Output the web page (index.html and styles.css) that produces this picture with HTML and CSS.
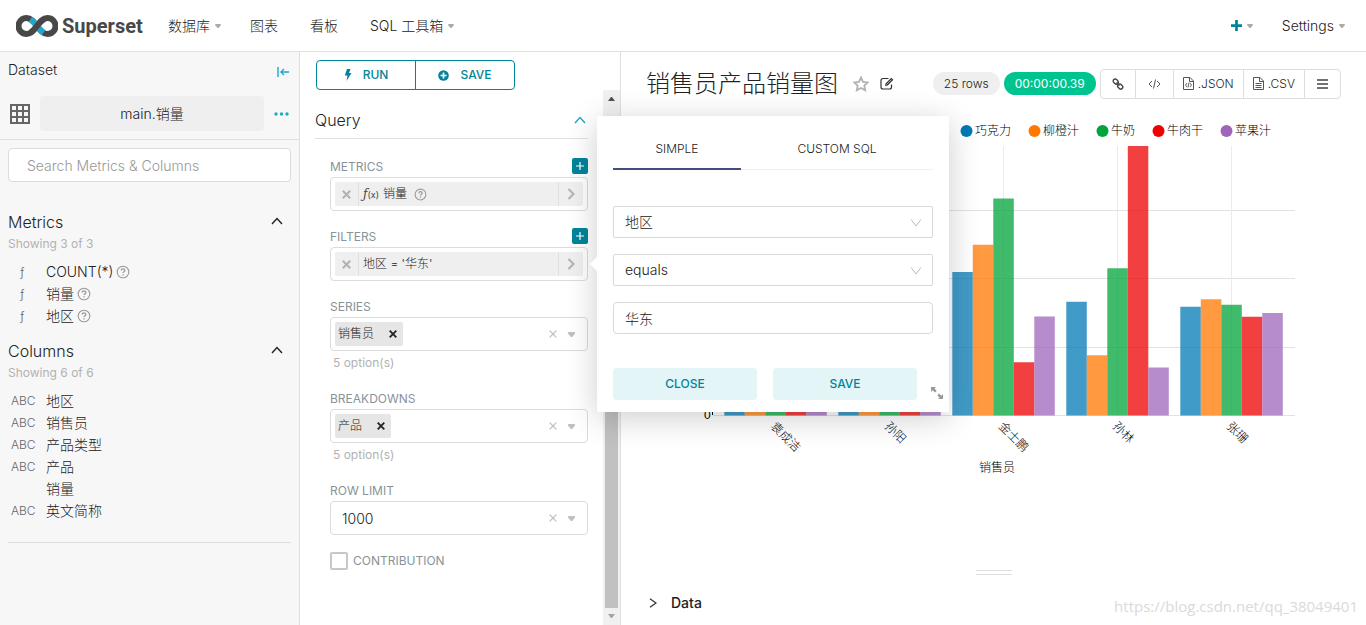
FILE: index.html
```html
<!DOCTYPE html>
<html lang="zh-CN">
<head>
<meta charset="utf-8">
<title>Superset</title>
<meta name="viewport" content="width=device-width, initial-scale=1">
<link rel="stylesheet" href="styles.css">
</head>
<body>
<svg class="defs" aria-hidden="true">
  <symbol id="caret" viewBox="0 0 6 4"><path d="M.5 0h5L6 1 3.500 4h-1L0 1z" fill="currentColor"/></symbol>
  <symbol id="help" viewBox="0 0 14 14"><circle cx="7" cy="7" r="5.800" fill="none" stroke="currentColor" stroke-width="1.100"/><path d="M5.200 5.600c0-2.300 3.600-2.200 3.600-.2 0 1.300-1.800 1.300-1.800 2.700M7 9.200v1.300" fill="none" stroke="currentColor" stroke-width="1.300"/></symbol>
  <symbol id="up" viewBox="0 0 12 8"><path d="M1 7l5-5.500L11 7" fill="none" stroke="currentColor" stroke-width="1.400"/></symbol>
  <symbol id="down" viewBox="0 0 12 8"><path d="M1 .5l5 6.500L11 .5" fill="none" stroke="currentColor"/></symbol>
  <symbol id="right" viewBox="0 0 8 12"><path d="M1.500 1l5 5-5 5" fill="none" stroke="currentColor" stroke-width="2"/></symbol>
  <symbol id="cross" viewBox="0 0 8 8"><path d="M.7.7l6.600 6.600M7.300.7L.7 7.300" fill="none" stroke="currentColor" stroke-width="1.800"/></symbol>
  <symbol id="thincross" viewBox="0 0 8 8"><path d="M.7.7l6.600 6.600M7.300.7L.7 7.300" fill="none" stroke="currentColor" stroke-width="1.200"/></symbol>
  <symbol id="plus" viewBox="0 0 12 12"><path d="M4.500 0h3v4.500H12v3H7.500V12h-3V7.500H0v-3h4.500z" fill="currentColor"/></symbol>
</svg>

<header class="topbar">
  <a class="brand" href="#">
    <svg class="brand-mark" viewBox="0 0 42 22" aria-hidden="true">
      <g fill="none" stroke-width="6">
        <path d="M21 11C18 7 15 3 10.500 3a8 8 0 0 0 0 16C15 19 18 15 21 11S27 3 31.500 3a8 8 0 0 1 0 16C27 19 24 15 21 11z" stroke="#484848"/>
        <path d="M14.500 4.200C17 5.800 19 8.300 21 11s4 5.200 6.500 6.800" stroke="#20a7c9"/>
        <path d="M14.500 17.800C17 16.200 19 13.700 21 11s4-5.200 6.500-6.800" stroke="#484848"/>
      </g>
    </svg>
    <span>Superset</span>
  </a>
  <nav class="menu">
    <a href="#">数据库<svg class="caret"><use href="#caret"/></svg></a>
    <a href="#">图表</a>
    <a href="#">看板</a>
    <a href="#">SQL 工具箱<svg class="caret"><use href="#caret"/></svg></a>
  </nav>
  <nav class="menu menu-right">
    <a class="add" href="#" aria-label="New"><svg class="plus"><use href="#plus"/></svg><svg class="caret"><use href="#caret"/></svg></a>
    <a href="#">Settings<svg class="caret"><use href="#caret"/></svg></a>
  </nav>
</header>

<main class="workspace">
  <aside class="dataset">
    <div class="dataset-head">
      <span>Dataset</span>
      <button class="plain teal" aria-label="Collapse"><svg width="12" height="10" viewBox="0 0 12 10"><path d="M1 0v10M12 5H4M7 2L4 5l3 3" fill="none" stroke="currentColor" stroke-width="1.400"/></svg></button>
    </div>
    <div class="dataset-name">
      <svg width="20" height="20" viewBox="0 0 20 20"><path d="M1 1h18v18H1zM1 7h18M1 13h18M7 1v18M13 1v18" fill="none" stroke="#666" stroke-width="2"/></svg>
      <button class="pill">main.销量</button>
      <button class="plain teal" aria-label="More"><svg width="15" height="4" viewBox="0 0 15 4"><g fill="currentColor"><circle cx="2" cy="2" r="1.700"/><circle cx="7.500" cy="2" r="1.700"/><circle cx="13" cy="2" r="1.700"/></g></svg></button>
    </div>
    <div class="dataset-body">
      <input class="search" type="text" placeholder="Search Metrics &amp; Columns" aria-label="Search Metrics &amp; Columns">
      <section class="group">
        <h2>Metrics<svg class="up"><use href="#up"/></svg></h2>
        <p>Showing 3 of 3</p>
        <ul>
          <li><i class="fn">ƒ</i>COUNT(*)<svg class="help"><use href="#help"/></svg></li>
          <li><i class="fn">ƒ</i>销量<svg class="help"><use href="#help"/></svg></li>
          <li><i class="fn">ƒ</i>地区<svg class="help"><use href="#help"/></svg></li>
        </ul>
      </section>
      <section class="group">
        <h2>Columns<svg class="up"><use href="#up"/></svg></h2>
        <p>Showing 6 of 6</p>
        <ul>
          <li><i>ABC</i>地区</li>
          <li><i>ABC</i>销售员</li>
          <li><i>ABC</i>产品类型</li>
          <li><i>ABC</i>产品</li>
          <li><i></i>销量</li>
          <li><i>ABC</i>英文简称</li>
        </ul>
      </section>
      <hr>
    </div>
  </aside>

  <section class="controls">
    <div class="actions">
      <button><svg width="8" height="12" viewBox="0 0 8 12"><path d="M3 0h3.500L5 4h2.500L2.500 12l1-5.500H.8z" fill="currentColor"/></svg>RUN</button>
      <button><svg width="11" height="11" viewBox="0 0 11 11"><circle cx="5.500" cy="5.500" r="5.300" fill="currentColor"/><path d="M5.500 2.500v6M2.500 5.500h6" stroke="#fff" stroke-width="1.700"/></svg>SAVE</button>
    </div>
    <div class="scroll">
      <div class="fields">
        <h2 class="query">Query<svg class="up"><use href="#up"/></svg></h2>
        <div class="stack">
          <div class="field">
            <div class="label">METRICS<button class="addbtn" aria-label="Add metric"><svg width="8" height="8" viewBox="0 0 8 8"><path d="M4 0v8M0 4h8" stroke="currentColor" stroke-width="1.200"/></svg></button></div>
            <div class="box">
              <div class="option">
                <button aria-label="Remove"><svg class="x"><use href="#cross"/></svg></button>
                <span class="option-text"><em>ƒ<small>(x)</small></em>销量<svg class="help"><use href="#help"/></svg></span>
                <button aria-label="Edit"><svg class="right"><use href="#right"/></svg></button>
              </div>
            </div>
          </div>
          <div class="field">
            <div class="label">FILTERS<button class="addbtn" aria-label="Add filter"><svg width="8" height="8" viewBox="0 0 8 8"><path d="M4 0v8M0 4h8" stroke="currentColor" stroke-width="1.200"/></svg></button></div>
            <div class="box">
              <div class="option">
                <button aria-label="Remove"><svg class="x"><use href="#cross"/></svg></button>
                <span class="option-text">地区 = '华东'</span>
                <button aria-label="Edit"><svg class="right"><use href="#right"/></svg></button>
              </div>
            </div>
            <form class="popover">
              <div class="tabs" role="tablist">
                <button type="button" role="tab" class="active" aria-selected="true">SIMPLE</button>
                <button type="button" role="tab" aria-selected="false">CUSTOM SQL</button>
              </div>
              <div class="inputs">
                <div class="select"><select aria-label="Column"><option>地区</option></select><svg class="down"><use href="#down"/></svg></div>
                <div class="select"><select aria-label="Operator"><option>equals</option></select><svg class="down"><use href="#down"/></svg></div>
                <input type="text" value="华东" aria-label="Value">
              </div>
              <div class="buttons">
                <button type="button">CLOSE</button>
                <button type="button">SAVE</button>
              </div>
              <svg class="resize" width="12" height="12" viewBox="0 0 12 12"><path d="M0 0h5L3.500 1.500l2.200 2.200-1.700 1.700-2.300-2.200L0 5zM12 12H7l1.500-1.500-2.200-2.200L8 6.600l2.300 2.200L12 7z" fill="#999"/></svg>
            </form>
          </div>
          <div class="field">
            <div class="label">SERIES</div>
            <div class="box">
              <span class="tag">销售员<button aria-label="Remove"><svg class="x"><use href="#cross"/></svg></button></span>
              <svg class="clear"><use href="#thincross"/></svg><svg class="drop"><use href="#caret"/></svg>
            </div>
            <div class="hint">5 option(s)</div>
          </div>
          <div class="field">
            <div class="label">BREAKDOWNS</div>
            <div class="box">
              <span class="tag">产品<button aria-label="Remove"><svg class="x"><use href="#cross"/></svg></button></span>
              <svg class="clear"><use href="#thincross"/></svg><svg class="drop"><use href="#caret"/></svg>
            </div>
            <div class="hint">5 option(s)</div>
          </div>
          <div class="field">
            <label class="label" for="limit">ROW LIMIT</label>
            <div class="box">
              <input id="limit" type="text" value="1000">
              <svg class="clear"><use href="#thincross"/></svg><svg class="drop"><use href="#caret"/></svg>
            </div>
          </div>
          <label class="check"><input type="checkbox">CONTRIBUTION</label>
        </div>
      </div>
      <div class="bar" aria-hidden="true">
        <svg width="7" height="4" viewBox="0 0 7 4"><path d="M0 4h7L4 0H3z" fill="#505050"/></svg>
        <span class="thumb"></span>
        <svg width="7" height="4" viewBox="0 0 7 4"><path d="M0 0h7L4 4H3z" fill="#a3a3a3"/></svg>
      </div>
    </div>
  </section>

  <section class="chart">
    <div class="chart-head">
      <h1>销售员产品销量图</h1>
      <button class="plain" aria-label="Favorite"><svg width="16" height="16" viewBox="0 0 16 16"><path d="M8 1.500l2 4.300 4.700.6-3.400 3.200.9 4.700L8 12l-4.200 2.300.9-4.700L1.300 6.400 6 5.800z" fill="none" stroke="#b2b2b2" stroke-width="1.800"/></svg></button>
      <button class="plain edit" aria-label="Edit"><svg width="15" height="13" viewBox="0 0 15 13"><path d="M8.500 1.500H3A2 2 0 0 0 1 3.500V10a2 2 0 0 0 2 2h6.500a2 2 0 0 0 2-2V7.500" fill="none" stroke="#333" stroke-width="1.200"/><path d="M5 9l.6-2.600L11.200.8l2.200 2L7.700 8.500z" fill="#333"/><path d="M6.500 7.500l5-5" stroke="#fff" stroke-width=".6"/></svg></button>
      <span class="badge">25 rows</span>
      <span class="badge time">00:00:00.39</span>
      <div class="tools">
        <button aria-label="Link"><svg width="12" height="12" viewBox="0 0 12 12"><g fill="none" stroke="#444" stroke-width="1.400"><rect x="1" y="1.500" width="5.500" height="4" rx="2" transform="rotate(45 3.700 3.500)"/><rect x="5.500" y="6.500" width="5.500" height="4" rx="2" transform="rotate(45 8.200 8.500)"/><path d="M4.500 4.500l3 3"/></g></svg></button>
        <button aria-label="Embed"><svg width="13" height="10" viewBox="0 0 13 10"><path d="M4 2L1 5l3 3M9 2l3 3-3 3M7.500.5l-2 9" fill="none" stroke="#555"/></svg></button>
        <button><svg width="11" height="13" viewBox="0 0 11 13"><path d="M.5.5h6.500l3.500 3.500v8.500H.5zM6.500.5V4.500h4" fill="none" stroke="#555"/><path d="M4 6L2.500 8 4 10M7 6l1.500 2L7 10M6 5.500l-1 5" fill="none" stroke="#555" stroke-width=".9"/></svg>.JSON</button>
        <button><svg width="11" height="13" viewBox="0 0 11 13"><path d="M.5.5h6.500l3.500 3.500v8.500H.5zM6.500.5V4.500h4M2.500 6.500h6M2.500 8.500h6M2.500 10.500h6" fill="none" stroke="#555"/></svg>.CSV</button>
        <button aria-label="Menu"><svg width="11" height="10" viewBox="0 0 11 10"><path d="M0 1h11M0 5h11M0 9h11" stroke="#444" stroke-width="1.600"/></svg></button>
      </div>
    </div>
    <svg class="plot" viewBox="645 115 696 370" role="img" aria-label="销售员产品销量图">
      <g stroke="#e2e2e2" shape-rendering="crispEdges">
        <path d="M713 210.500H1295M713 278.500H1295M713 347.500H1295M713 415.500H1295"/>
        <path d="M775.500 146V415M889.500 146V415M1003.500 146V415M1117.500 146V415M1231.500 146V415" stroke="#ebebeb"/>
      </g>
      <path d="M712.500 411V415" stroke="#000"/>
      <g fill-opacity=".75">
        <g fill="#0079b5"><path d="M724.300 330h20.500v85.500h-20.500zM838.300 320h20.500v95.500h-20.500zM952.300 272h20.500v143.500h-20.500zM1066.300 301.700h20.500v113.800h-20.500zM1180.300 306.800h20.500v108.700h-20.500z"/></g>
        <g fill="#ff7800"><path d="M744.800 300h20.500v115.500h-20.500zM858.800 340h20.500v75.500h-20.500zM972.800 244.700h20.500v170.800h-20.500zM1086.800 355.300h20.500v60.200h-20.500zM1200.800 299.200h20.500v116.300h-20.500z"/></g>
        <g fill="#00a43a"><path d="M765.300 310h20.500v105.500h-20.500zM879.300 290h20.500v125.500h-20.500zM993.300 198.400h20.500v217.100h-20.500zM1107.300 268.200h20.500v147.300h-20.500zM1221.300 304.800h20.500v110.700h-20.500z"/></g>
        <g fill="#ee0000"><path d="M785.800 350h20.500v65.500h-20.500zM899.800 330h20.500v85.500h-20.500zM1013.800 362.200h20.500v53.300h-20.500zM1127.800 146h20.500v269.500h-20.500zM1241.800 316.700h20.500v98.800h-20.500z"/></g>
        <g fill="#9e65bb"><path d="M806.300 320h20.500v95.500h-20.500zM920.300 340h20.500v75.500h-20.500zM1034.300 316.500h20.500v99h-20.500zM1148.300 367.500h20.500v48h-20.500zM1262.300 312.900h20.500v102.600h-20.500z"/></g>
      </g>
      <g class="legend">
        <circle cx="966.500" cy="131" r="6" fill="#0079b5"/><text x="975" y="135">巧克力</text>
        <circle cx="1034.500" cy="131" r="6" fill="#ff7800"/><text x="1043" y="135">柳橙汁</text>
        <circle cx="1102.500" cy="131" r="6" fill="#00a43a"/><text x="1111" y="135">牛奶</text>
        <circle cx="1158.500" cy="131" r="6" fill="#ee0000"/><text x="1167" y="135">牛肉干</text>
        <circle cx="1226.500" cy="131" r="6" fill="#9e65bb"/><text x="1235" y="135">苹果汁</text>
      </g>
      <g class="axis">
        <text x="704" y="419">0</text>
        <text transform="translate(770 427) rotate(45)">袁成洁</text>
        <text transform="translate(884 427) rotate(45)">孙阳</text>
        <text transform="translate(998 427) rotate(45)">金士鹏</text>
        <text transform="translate(1112 427) rotate(45)">孙林</text>
        <text transform="translate(1226 427) rotate(45)">张珊</text>
        <text x="979" y="472">销售员</text>
      </g>
    </svg>
    <div class="foot">
      <div class="grip"></div>
      <button class="data"><svg width="8" height="10" viewBox="0 0 8 10"><path d="M1 .7L7 5 1 9.300" fill="none" stroke="#333" stroke-width="1.300"/></svg>Data</button>
    </div>
    <span class="watermark">https://blog.csdn.net/qq_38049401</span>
  </section>
</main>
</body>
</html>
```
FILE: styles.css
```css
* { box-sizing: border-box; }
body {
  margin: 0;
  min-height: 100vh;
  display: flex;
  flex-direction: column;
  font: 14px/22px Inter, "Noto Sans CJK SC", sans-serif;
  font-weight: 300;
  color: #222;
  background: #fff;
}
button, input, select { font: inherit; color: inherit; }
button { cursor: pointer; padding: 0; border: 0; background: none; }
h1, h2, p, ul { margin: 0; padding: 0; font-weight: inherit; }
svg { flex: none; display: block; }
.defs { position: absolute; width: 0; height: 0; }
.plain { display: flex; align-items: center; }
.teal { color: #20a7c9; }
.caret { width: 6px; height: 4px; color: #aaa; margin-left: 5px; margin-right: -3px; }
.help { width: 14px; height: 14px; color: #999; }
.up { width: 12px; height: 8px; }

.topbar {
  height: 52px;
  display: flex;
  align-items: center;
  padding: 0 24px 0 16px;
  border-bottom: 1px solid #e0e0e0;
}
.brand {
  display: flex;
  align-items: center;
  gap: 4px;
  width: 152px;
  color: #484848;
  font: 700 20px/24px Roboto, sans-serif;
  text-decoration: none;
}
.brand-mark { width: 42px; height: 22px; }
.menu { display: flex; gap: 32px; }
.menu a { display: flex; align-items: center; color: #222; text-decoration: none; }
.menu-right { margin-left: auto; }
.menu .add { color: #00849a; }
.plus { width: 11px; height: 11px; }

.workspace { flex: 1; display: flex; }
.dataset {
  flex: none;
  width: 300px;
  background: #f7f7f7;
  border-right: 1px solid #e0e0e0;
}
.dataset-head {
  display: flex;
  justify-content: space-between;
  align-items: center;
  padding: 7px 10px 1px 8px;
}
.dataset-head button { padding-top: 3px; }
.dataset-name {
  display: flex;
  align-items: center;
  gap: 10px;
  padding: 14px 10px 8px;
  border-bottom: 1px solid #e0e0e0;
}
.pill { flex: 1; height: 35px; border-radius: 4px; background: #efefef; }
.dataset-body { padding: 8px; }
.search {
  width: 100%;
  height: 34px;
  padding: 0 18px;
  border: 1px solid #dcdcdc;
  border-radius: 4px;
  background: #fff;
}
.search::placeholder { color: #999; opacity: 1; }
.group { margin-top: 12px; }
.search + .group { margin-top: 28px; }
.group h2 {
  display: flex;
  justify-content: space-between;
  align-items: center;
  padding-right: 8px;
  font-size: 16px;
  line-height: 24px;
}
.group h2 .up { margin-bottom: 2px; }
.group p { font-size: 12px; line-height: 20px; color: #b2b2b2; font-weight: 400; }
.group ul { list-style: none; margin-top: 7px; }
.group li { display: flex; align-items: center; height: 22px; }
.group li i { width: 38px; padding-left: 3px; font-style: normal; font-size: 12px; color: #666; }
.group li .fn { padding-left: 12px; }
.group li .help { margin-left: 3px; }
.dataset hr { height: 1px; margin: 20px 0 0; border: 0; background: #e0e0e0; }

.controls {
  flex: none;
  width: 321px;
  display: flex;
  flex-direction: column;
  border-right: 1px solid #e0e0e0;
}
.actions { display: flex; padding: 8px 16px 0; }
.actions button {
  width: 100px;
  height: 30px;
  display: flex;
  justify-content: center;
  align-items: center;
  gap: 11px;
  border: 1px solid #00849a;
  border-radius: 4px 0 0 4px;
  color: #00849a;
  font-size: 12px;
  font-weight: 500;
}
.actions button + button { border-radius: 0 4px 4px 0; margin-left: -1px; }
.scroll { flex: 1; display: flex; }
.fields { flex: 1; min-width: 0; padding: 14px 15px 0; }
.query {
  display: flex;
  justify-content: space-between;
  align-items: center;
  height: 35px;
  padding: 0 2px 2px 0;
  border-bottom: 1px solid #e0e0e0;
  font-size: 16px;
}
.query .up { color: #20a7c9; }
.stack { display: flex; flex-direction: column; gap: 16px; padding: 18px 0 0 15px; }
.field { position: relative; }
.label {
  display: flex;
  justify-content: space-between;
  align-items: center;
  height: 20px;
  font-size: 12px;
  color: #879399;
  font-weight: 400;
}
.addbtn {
  width: 16px;
  height: 16px;
  display: grid;
  place-items: center;
  margin-bottom: 2px;
  border-radius: 2px;
  background: #00849a;
  color: #fff;
}
.box {
  display: flex;
  align-items: center;
  height: 34px;
  padding: 0 4px;
  border: 1px solid #dcdcdc;
  border-radius: 4px;
}
.option {
  flex: 1;
  display: flex;
  align-items: stretch;
  height: 24px;
  border-radius: 2px;
  background: #efefef;
  font-size: 12px;
}
.option button { width: 24px; display: grid; place-items: center; color: #b2b2b2; }
.option button:first-child { width: 23px; }
.option .x { width: 9px; height: 9px; }
.right { width: 8px; height: 12px; }
.option-text {
  flex: 1;
  display: flex;
  align-items: center;
  padding: 0 4px;
  border: solid #e0e0e0;
  border-width: 0 1px;
}
.option-text em { margin-right: 4px; font: italic 12px/16px "DejaVu Serif", serif; color: #444; }
.option-text small { font: 9px/16px Inter, sans-serif; }
.option-text .help { margin-left: 7px; width: 13px; height: 13px; }
.tag {
  display: flex;
  align-items: center;
  gap: 15px;
  height: 24px;
  padding: 0 6px 0 3px;
  border-radius: 2px;
  background: #e6e6e6;
  font-size: 12px;
}
.tag .x { width: 8px; height: 8px; color: #222; }
.clear { width: 8px; height: 8px; margin-left: auto; color: #bbb; }
.drop { width: 9px; height: 5px; margin: 0 7px 0 10px; color: #c0c0c0; }
.box input { flex: 1; min-width: 0; height: 28px; padding: 0 7px; border: 0; background: none; }
.hint { padding: 2px 0 0 3px; font-size: 12px; line-height: 20px; color: #b2b2b2; font-weight: 400; }
.check { display: flex; align-items: center; gap: 5px; height: 20px; font-size: 12px; color: #879399; font-weight: 400; }
.check input { appearance: none; width: 18px; height: 18px; margin: 0; border: 2px solid #c8c8c8; border-radius: 2px; background: #fff; }
.bar {
  flex: none;
  width: 17px;
  display: flex;
  flex-direction: column;
  align-items: center;
  padding: 7px 0;
  background: #f0f0f0;
}
.thumb { flex: 1; width: 13px; margin: 60px 0 6px; background: #c1c1c1; }

.popover {
  position: absolute;
  z-index: 2;
  left: calc(100% + 9px);
  top: -111px;
  width: 352px;
  padding: 16px 16px 12px;
  border-radius: 2px;
  background: #fff;
  box-shadow: 0 6px 32px rgba(0, 0, 0, .2);
}
.popover::before {
  content: "";
  position: absolute;
  left: -5px;
  top: 143px;
  width: 10px;
  height: 10px;
  background: #fff;
  transform: rotate(45deg);
}
.tabs { display: flex; gap: 32px; border-bottom: 1px solid #f0f0f0; }
.tabs button { width: 128px; height: 38px; margin-bottom: -1px; padding-bottom: 2px; border-bottom: 2px solid transparent; font-size: 12px; }
.tabs .active { border-color: #444e7c; }
.inputs { display: flex; flex-direction: column; gap: 16px; margin: 36px 0 34px; }
.select { position: relative; }
.select select, .inputs input {
  appearance: none;
  display: block;
  width: 100%;
  height: 32px;
  padding: 0 11px;
  border: 1px solid #d9d9d9;
  border-radius: 2px;
  background: #fff;
}
.inputs input { border-radius: 4px; }
.down { position: absolute; right: 11px; top: 13px; width: 12px; height: 8px; color: #bbb; }
.buttons { display: flex; gap: 16px; padding-right: 16px; }
.buttons button {
  flex: 1;
  height: 32px;
  border-radius: 4px;
  background: #e4f5f8;
  color: #00849a;
  font-size: 12px;
  font-weight: 500;
}
.resize { position: absolute; right: 6px; bottom: 13px; }

.chart { flex: 1; min-width: 0; position: relative; display: flex; flex-direction: column; }
.chart-head { display: flex; align-items: center; height: 63px; padding: 0 25px 0 25px; }
.chart-head h1 { margin-right: 15px; font-size: 24px; line-height: 32px; white-space: nowrap; }
.edit { margin: 0 auto 0 11px; }
.badge {
  height: 23px;
  padding: 0 11px;
  border-radius: 12px;
  background: #efefef;
  font-size: 12px;
  line-height: 23px;
}
.time { margin: 0 4px; background: #00c48f; color: #fff; font-weight: 400; }
.tools { display: flex; border: 1px solid #dedede; border-radius: 4px; }
.tools button { display: flex; align-items: center; gap: 4px; height: 28px; padding: 0 9px; font-size: 12px; }
.tools button:first-child { padding: 0 11px; }
.tools button:nth-child(2), .tools button:last-child { padding: 0 12px; }
.tools button + button { border-left: 1px solid #dedede; }
.plot { width: calc(100% - 49px); margin-left: 24px; }
.legend text, .axis text { font: 300 12px "Liberation Sans", "Noto Sans CJK SC", sans-serif; fill: #000; }
.foot { margin-top: auto; padding-bottom: 11px; }
.grip { width: 36px; height: 5px; margin: 0 auto 17px; border: solid #dedede; border-width: 1px 0; }
.data { display: flex; align-items: center; gap: 14px; margin-left: 28px; font-weight: 500; }
.watermark {
  position: absolute;
  right: 8px;
  bottom: 9px;
  font: 15px/20px "Open Sans", sans-serif;
  color: #dadada;
}
```
